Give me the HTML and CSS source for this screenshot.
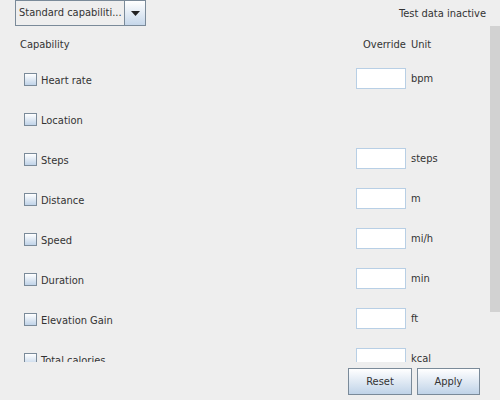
FILE: index.html
```html
<!DOCTYPE html>
<html>
<head>
<meta charset="utf-8">
<link rel="stylesheet" href="styles.css">
</head>
<body>
<div class="top">
  <div class="combo">
    <span class="combo-text">Standard capabiliti...</span>
    <span class="combo-btn"><svg width="9" height="5" viewBox="0 0 9 5"><path d="M0 0H9L4.5 5Z" fill="#222"/></svg></span>
  </div>
  <span class="status">Test data inactive</span>
</div>
<div class="scroll">
  <div class="content">
    <div class="head">
      <span class="h-cap">Capability</span>
      <span class="h-ovr">Override</span>
      <span class="h-unit">Unit</span>
    </div>
    <div class="row"><span class="cb"></span><span class="name">Heart rate</span><span class="field"></span><span class="unit">bpm</span></div>
    <div class="row"><span class="cb"></span><span class="name">Location</span></div>
    <div class="row"><span class="cb"></span><span class="name">Steps</span><span class="field"></span><span class="unit">steps</span></div>
    <div class="row"><span class="cb"></span><span class="name">Distance</span><span class="field"></span><span class="unit">m</span></div>
    <div class="row"><span class="cb"></span><span class="name">Speed</span><span class="field"></span><span class="unit">mi/h</span></div>
    <div class="row"><span class="cb"></span><span class="name">Duration</span><span class="field"></span><span class="unit">min</span></div>
    <div class="row"><span class="cb"></span><span class="name">Elevation Gain</span><span class="field"></span><span class="unit">ft</span></div>
    <div class="row"><span class="cb"></span><span class="name">Total calories</span><span class="field"></span><span class="unit">kcal</span></div>
  </div>
  <div class="sbar"><div class="thumb"></div></div>
</div>
<div class="bottom">
  <button class="btn">Reset</button>
  <button class="btn apply">Apply</button>
</div>
</body>
</html>
```

FILE: styles.css
```css
html, body {
  margin: 0;
  padding: 0;
  width: 500px;
  height: 400px;
  background: #eeeeee;
  font-family: "DejaVu Sans Condensed", "DejaVu Sans", sans-serif;
  font-size: 11px;
  color: #333333;
  overflow: hidden;
}
.top {
  height: 26px;
  display: flex;
  align-items: flex-start;
  justify-content: space-between;
  padding: 0 14px 0 15px;
}
.combo {
  width: 129px;
  height: 24px;
  border: 1px solid #7a8a99;
  display: flex;
  background: #eeeeee;
}
.combo-text {
  flex: 1;
  line-height: 24px;
  padding-left: 3px;
  white-space: nowrap;
  overflow: hidden;
}
.combo-btn {
  width: 20px;
  border-left: 1px solid #7a8a99;
  background: linear-gradient(#ffffff, #c6d7ea);
  display: flex;
  align-items: center;
  justify-content: center;
}
.status {
  line-height: 28px;
}
.scroll {
  height: 336px;
  display: flex;
  overflow: hidden;
}
.content {
  flex: 1;
  display: flex;
  flex-direction: column;
}
.head {
  height: 36px;
  flex: none;
  display: flex;
  align-items: center;
}
.h-cap { margin-left: 20px; width: 343px; }
.h-ovr { width: 48px; }
.row {
  height: 40px;
  flex: none;
  display: flex;
  align-items: center;
  margin-top: -2px;
  margin-bottom: 2px;
}
.cb {
  width: 11px;
  height: 11px;
  margin-left: 24px;
  border: 1px solid #7a8a99;
  background: linear-gradient(#ffffff, #c0d3e8);
  margin-top: -1px;
}
.name {
  margin-left: 4px;
  width: 315px;
}
.field {
  width: 48px;
  height: 19px;
  border: 1px solid #b8cfe5;
  background: #ffffff;
  margin-top: -3px;
}
.unit {
  margin-left: 5px;
  margin-top: -3px;
}
.sbar {
  width: 10px;
  display: flex;
  flex-direction: column;
}
.thumb {
  height: 286px;
  background: #d2d2d2;
}
.bottom {
  display: flex;
  justify-content: flex-end;
  gap: 5px;
  padding: 6px 20px 0 0;
}
.btn {
  font-family: "DejaVu Sans Condensed", "DejaVu Sans", sans-serif;
  font-size: 11px;
  color: #333333;
  width: 64px;
  height: 27px;
  border: 1px solid #7a8a99;
  background: linear-gradient(#ffffff, #c0d3e8);
  padding: 0;
  margin: 0;
}
.apply { width: 63px; }
```
